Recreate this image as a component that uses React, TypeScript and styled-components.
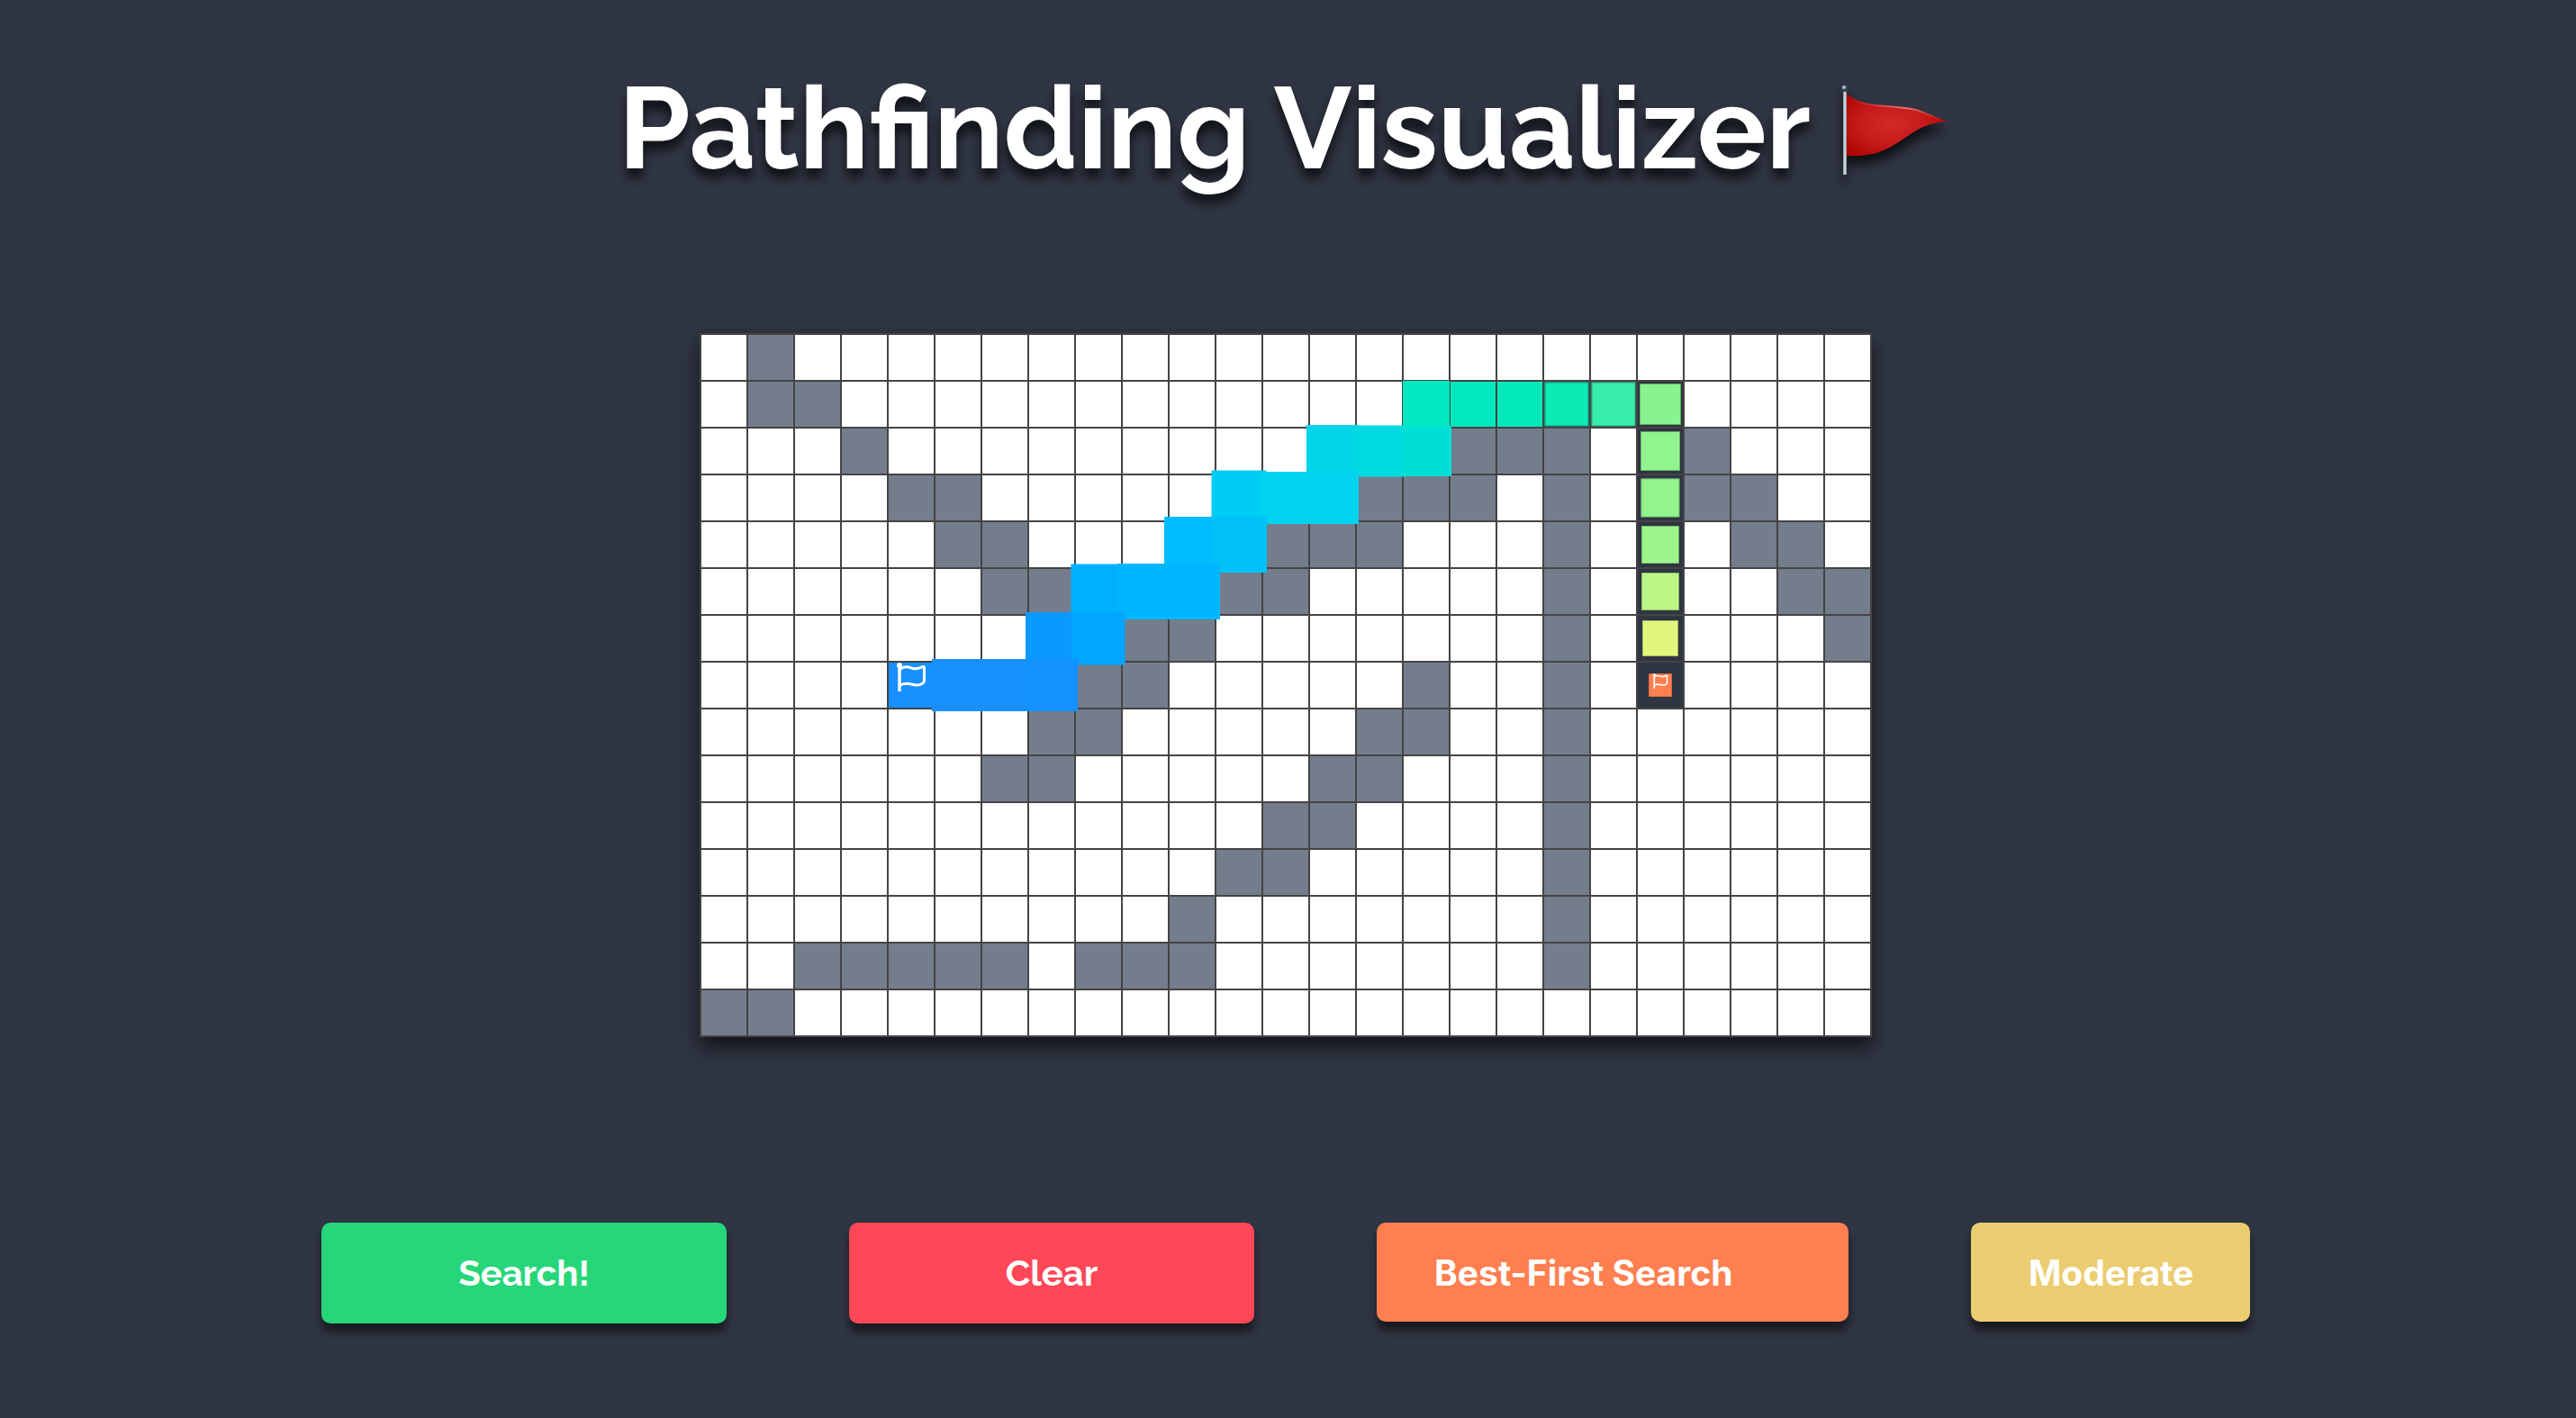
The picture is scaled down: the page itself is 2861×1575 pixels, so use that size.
import React, { useState } from "react";
import styled, { createGlobalStyle } from "styled-components";

const GlobalStyle = createGlobalStyle`
  * { box-sizing: border-box; }
  body { margin: 0; background: #2f3542; }
`;

const Page = styled.main`
  min-height: 100vh;
  padding: 62px 5px 104px 0;
  display: flex;
  flex-direction: column;
  align-items: center;
  background: #2f3542;
  font-family: "Raleway", "Lato", sans-serif;
`;

const Title = styled.h1`
  margin: 0 0 148px;
  padding-right: 4px;
  height: 160px;
  display: flex;
  align-items: center;
  gap: 30px;
  color: #ffffff;
  font-size: 128px;
  font-weight: 700;
  line-height: 160px;
  text-shadow: 0 10px 12px rgba(0, 0, 0, 0.7);
`;

const TitleFlag = styled.svg`
  width: 124px;
  height: 108px;
  margin-top: 4px;
  filter: drop-shadow(0 10px 6px rgba(0, 0, 0, 0.7));
`;

const Board = styled.div`
  display: grid;
  grid-template-columns: repeat(25, 50px);
  grid-auto-rows: 50px;
  gap: 2px;
  padding: 2px;
  background: #444444;
  box-shadow: 0 12px 20px rgba(0, 0, 0, 0.6);
`;

const Cell = styled.div<{ $kind: "open" | "wall" | "path" }>`
  background: ${(p) =>
    p.$kind === "wall" ? "#747d8c" : p.$kind === "path" ? "#2f3542" : "#ffffff"};
`;

const Tile = styled.div<{ $color: string; $size: number }>`
  width: 50px;
  height: 50px;
  background: ${(p) => p.$color};
  box-shadow: ${(p) => (p.$size < 50 ? "inset 0 0 0 1px rgba(0, 0, 0, 0.3)" : "none")};
  transform: scale(${(p) => p.$size / 50});
`;

const Marker = styled.svg`
  display: block;
  width: 34px;
  height: 34px;
  margin-left: 8px;
`;

const Controls = styled.div`
  margin-top: 206px;
  display: flex;
  align-items: flex-start;
  gap: 136px;
`;

const Action = styled.button<{ $color: string }>`
  width: 450px;
  height: 112px;
  padding: 0;
  border: 0;
  border-radius: 10px;
  background: ${(p) => p.$color};
  color: #ffffff;
  font: 700 40px/48px "Raleway", "Lato", sans-serif;
  box-shadow: 0 10px 10px rgba(0, 0, 0, 0.5);
  cursor: pointer;
`;

const Picker = styled.select<{ $color: string; $width: number }>`
  appearance: none;
  width: ${(p) => p.$width}px;
  height: 110px;
  padding: 2px 0 0 64px;
  border: 0;
  border-radius: 10px;
  background: ${(p) => p.$color};
  color: #ffffff;
  font: 700 39px/48px "Inter", sans-serif;
  box-shadow: 0 10px 10px rgba(0, 0, 0, 0.5);
  cursor: pointer;
`;

const COLUMNS = 25;

const WALLS: number[][] = [
  [1],
  [1, 2],
  [3, 16, 17, 18, 21],
  [4, 5, 14, 15, 16, 18, 21, 22],
  [5, 6, 12, 13, 14, 18, 22, 23],
  [6, 7, 11, 12, 18, 23, 24],
  [9, 10, 18, 24],
  [8, 9, 15, 18],
  [7, 8, 14, 15, 18],
  [6, 7, 13, 14, 18],
  [12, 13, 18],
  [11, 12, 18],
  [10, 18],
  [2, 3, 4, 5, 6, 8, 9, 10, 18],
  [0, 1],
];

type Step = { color: string; size: number };

const PATH: Record<string, Step> = {
  "7-4": { color: "#1890ff", size: 50 },
  "7-5": { color: "#1890ff", size: 58 },
  "7-6": { color: "#1890ff", size: 58 },
  "7-7": { color: "#1492ff", size: 58 },
  "6-7": { color: "#0a99ff", size: 58 },
  "6-8": { color: "#02a6ff", size: 59 },
  "5-8": { color: "#00b0ff", size: 61 },
  "5-9": { color: "#00b6ff", size: 62 },
  "5-10": { color: "#00b7ff", size: 62 },
  "4-10": { color: "#00bbff", size: 62 },
  "4-11": { color: "#00c1f9", size: 62 },
  "3-11": { color: "#00cdf3", size: 61 },
  "3-12": { color: "#00d2f0", size: 58 },
  "3-13": { color: "#00d3ee", size: 58 },
  "2-13": { color: "#00d6e8", size: 58 },
  "2-14": { color: "#00d9e2", size: 57 },
  "2-15": { color: "#00dfd5", size: 56 },
  "1-15": { color: "#00e8c0", size: 52 },
  "1-16": { color: "#00e9be", size: 50 },
  "1-17": { color: "#02eabb", size: 50 },
  "1-18": { color: "#0cebb6", size: 49 },
  "1-19": { color: "#39eeab", size: 49 },
  "1-20": { color: "#87f490", size: 46 },
  "2-20": { color: "#90f48f", size: 44 },
  "3-20": { color: "#92f48e", size: 43 },
  "4-20": { color: "#9cf58b", size: 42 },
  "5-20": { color: "#bbf685", size: 42 },
  "6-20": { color: "#e2f67e", size: 40 },
  "7-20": { color: "#ff7f50", size: 26 },
};

const START = "7-4";
const TARGET = "7-20";

function FlagMarker({ label }: { label: string }) {
  return (
    <Marker viewBox="0 0 34 34" fill="none" stroke="#ffffff" role="img" aria-label={label}>
      <circle cx="4" cy="3" r="3" fill="#ffffff" stroke="none" />
      <path d="M4 3V32" strokeWidth="3.4" />
      <path
        d="M5 7C10 3 15 5 19 6.500C24 8 27 5 30.500 4.500Q31.500 4.500 31.500 6V20Q31.500 22 29 23.500C25 26 21 25 17 24C13 23 9 23 5 25"
        strokeWidth="3"
        strokeLinejoin="round"
      />
    </Marker>
  );
}

function Pennant() {
  return (
    <TitleFlag viewBox="0 0 124 108" aria-hidden="true">
      <defs>
        <radialGradient id="cloth" cx="0.45" cy="0.5" r="0.6">
          <stop offset="0" stopColor="#d42828" />
          <stop offset="0.5" stopColor="#c81c1c" />
          <stop offset="1" stopColor="#b00404" />
        </radialGradient>
        <linearGradient id="pole" x1="0" x2="1" y1="0" y2="0">
          <stop offset="0" stopColor="#7b8790" />
          <stop offset="0.5" stopColor="#e4edf2" />
          <stop offset="1" stopColor="#77828a" />
        </linearGradient>
        <linearGradient id="sheen" x1="0" x2="1" y1="0" y2="0">
          <stop offset="0" stopColor="#d86060" stopOpacity="0" />
          <stop offset="0.6" stopColor="#e08080" stopOpacity="0.9" />
          <stop offset="1" stopColor="#d86060" stopOpacity="0" />
        </linearGradient>
      </defs>
      <path
        d="M9 13C20 24 36 26 54 27C72 29 82 29 90 32C100 36 112 41 121 45C110 46 104 47 95 51C82 57 76 63 64 70C48 80 36 84 9 83Z"
        fill="url(#cloth)"
      />
      <path d="M12 17C22 25 36 27 54 28C72 30 82 30 90 33C100 37 110 41 118 44" fill="none" stroke="url(#sheen)" strokeWidth="2" />
      <rect x="6" y="11" width="4" height="93" fill="url(#pole)" />
      <circle cx="8" cy="8" r="4" fill="#34434f" />
      <circle cx="7" cy="7" r="2" fill="#a9c4da" />
    </TitleFlag>
  );
}

export default function App() {
  const [algorithm, setAlgorithm] = useState("Best-First Search");
  const [speed, setSpeed] = useState("Moderate");

  return (
    <>
      <GlobalStyle />
      <Page>
        <Title>
          Pathfinding Visualizer
          <Pennant />
        </Title>
        <Board>
          {WALLS.flatMap((walls, row) =>
            Array.from({ length: COLUMNS }, (_, column) => {
              const id = `${row}-${column}`;
              const step = PATH[id];
              if (!step) {
                return <Cell key={id} $kind={walls.includes(column) ? "wall" : "open"} />;
              }
              return (
                <Cell key={id} $kind="path">
                  <Tile $color={step.color} $size={step.size}>
                    {id === START && <FlagMarker label="Start" />}
                    {id === TARGET && <FlagMarker label="Target" />}
                  </Tile>
                </Cell>
              );
            })
          )}
        </Board>
        <Controls>
          <Action type="button" $color="#27d679">Search!</Action>
          <Action type="button" $color="#ff4757">Clear</Action>
          <Picker
            aria-label="Algorithm"
            $color="#ff7f50"
            $width={524}
            value={algorithm}
            onChange={(e) => setAlgorithm(e.target.value)}
          >
            <option>Best-First Search</option>
          </Picker>
          <Picker
            aria-label="Speed"
            $color="#eccc70"
            $width={310}
            value={speed}
            onChange={(e) => setSpeed(e.target.value)}
          >
            <option>Moderate</option>
          </Picker>
        </Controls>
      </Page>
    </>
  );
}
